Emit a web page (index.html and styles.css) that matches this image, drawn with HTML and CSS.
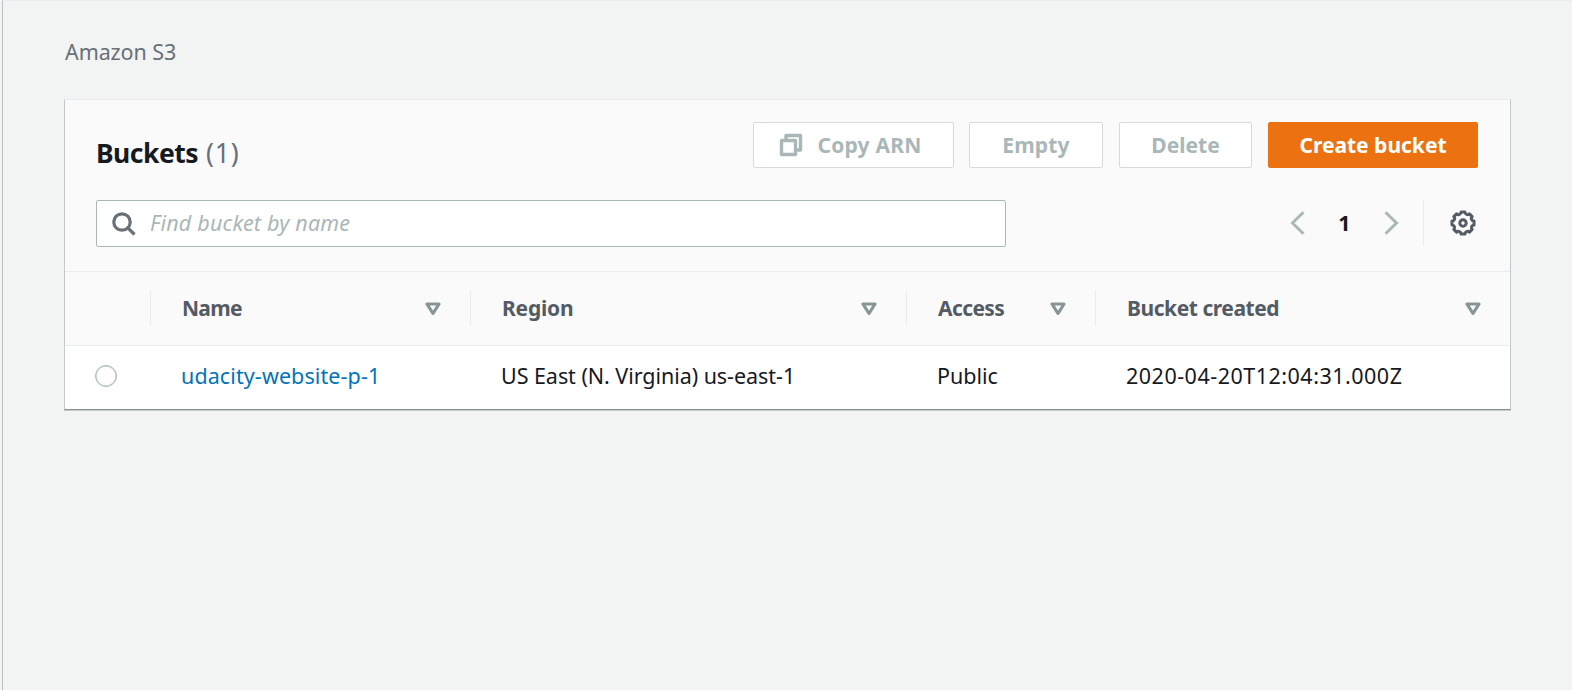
FILE: index.html
```html
<!DOCTYPE html>
<html lang="en">
<head>
<meta charset="utf-8">
<title>Amazon S3</title>
<link rel="stylesheet" href="styles.css">
</head>
<body>
<main class="page">
  <nav class="breadcrumb"><span class="t-crumb">Amazon S3</span></nav>
  <section class="card">
    <header class="toolbar">
      <div class="title-row">
        <h1 class="title"><span class="t-title">Buckets</span> <span class="count">(1)</span></h1>
        <div class="actions">
          <button class="btn btn-copy" disabled>
            <svg class="copy-icon" width="24" height="24" viewBox="0 0 24 24"><path d="M7 7V2.500h14.500V17H17M2.500 7.500h14v14h-14z"/></svg>
            <span class="t-copy">Copy ARN</span>
          </button>
          <button class="btn btn-empty" disabled><span class="t-empty">Empty</span></button>
          <button class="btn btn-delete" disabled><span class="t-delete">Delete</span></button>
          <button class="btn btn-primary"><span class="t-create">Create bucket</span></button>
        </div>
      </div>
      <div class="filter-row">
        <div class="search">
          <svg class="search-icon" width="24" height="24" viewBox="0 0 24 24"><circle cx="10" cy="10" r="8.200"/><path d="M15.800 15.800L22.500 22.500"/></svg>
          <span class="placeholder">Find bucket by name</span>
        </div>
        <div class="pager">
          <svg class="chevron" width="16" height="24" viewBox="0 0 16 24"><path d="M13.500 1.200L2.500 12l11 10.800"/></svg>
          <span class="page-number">1</span>
          <svg class="chevron" width="16" height="24" viewBox="0 0 16 24"><path d="M2.500 1.200L13.500 12l-11 10.800"/></svg>
          <span class="pager-divider"></span>
          <svg class="gear" width="26" height="26" viewBox="-13 -13 26 26"><path d="M11.030 -1.940L11.030 1.940A2.600 2.600 0 0 0 9.170 6.420L6.420 9.170A2.600 2.600 0 0 0 1.940 11.030L-1.940 11.030A2.600 2.600 0 0 0 -6.420 9.170L-9.170 6.420A2.600 2.600 0 0 0 -11.030 1.940L-11.030 -1.940A2.600 2.600 0 0 0 -9.170 -6.420L-6.420 -9.170A2.600 2.600 0 0 0 -1.940 -11.030L1.940 -11.030A2.600 2.600 0 0 0 6.420 -9.170L9.170 -6.420A2.600 2.600 0 0 0 11.030 -1.940Z"/><circle r="3.200"/></svg>
        </div>
      </div>
    </header>
    <div class="grid head">
      <div class="cell"></div>
      <div class="cell"><span class="t-name">Name</span><svg class="sort" width="16" height="14" viewBox="0 0 16 14"><path d="M2 2h12L8 11.500z"/></svg></div>
      <div class="cell"><span class="t-region">Region</span><svg class="sort" width="16" height="14" viewBox="0 0 16 14"><path d="M2 2h12L8 11.500z"/></svg></div>
      <div class="cell"><span class="t-access">Access</span><svg class="sort" width="16" height="14" viewBox="0 0 16 14"><path d="M2 2h12L8 11.500z"/></svg></div>
      <div class="cell"><span class="t-created">Bucket created</span><svg class="sort" width="16" height="14" viewBox="0 0 16 14"><path d="M2 2h12L8 11.500z"/></svg></div>
    </div>
    <div class="grid row">
      <div class="select"><span class="radio"></span></div>
      <div class="data"><a class="link">udacity-website-p-1</a></div>
      <div class="data"><span class="v-region">US East (N. Virginia) us-east-1</span></div>
      <div class="data"><span class="v-access">Public</span></div>
      <div class="data"><span class="v-date">2020-04-20T12:04:31.000Z</span></div>
    </div>
  </section>
</main>
</body>
</html>
```
FILE: styles.css
```css
* { box-sizing: border-box; }
body {
  margin: 0;
  height: 690px;
  overflow: hidden;
  background: #f2f3f3;
  font: 21.5px/30px "Noto Sans", sans-serif;
  color: #16191f;
}
.page {
  height: 690px;
  margin-left: 2px;
  border-left: 1px solid #b9c1c1;
  border-top: 1px solid #eaeded;
  padding: 36px 61px 0;
}
.breadcrumb { height: 62px; padding-left: 1px; color: #687078; }
.breadcrumb span, .btn span, .cell span, .data span, .link, .placeholder { white-space: nowrap; }
.card {
  width: 1447px;
  height: 311px;
  border: 1px solid #c3caca;
  border-top-color: #eaeded;
  border-bottom-color: #879596;
  box-shadow: 0 1px 0 #c3caca;
  background: #fff;
}
.toolbar {
  height: 172px;
  padding: 22px 32px 0 31px;
  background: #fafafa;
  border-bottom: 1px solid #eaeded;
}
.title-row { display: flex; justify-content: space-between; height: 78px; }
.title { margin: 13px 0 0; font-size: 26.5px; line-height: 36px; font-weight: 700; white-space: nowrap; }
.t-title { letter-spacing: -.5px; }
.count { margin-left: 1px; font-weight: 400; color: #687078; letter-spacing: .8px; }
.actions { display: flex; }
.btn {
  display: flex;
  align-items: center;
  justify-content: center;
  height: 46px;
  padding: 0 0 1px;
  border: 1px solid #d5dbdb;
  border-radius: 2px;
  background: #fff;
  color: #aab7b8;
  font: 700 21px/30px "Noto Sans", sans-serif;
}
.btn-copy { width: 201px; gap: 15px; margin-right: 15px; padding-right: 7px; }
.btn-empty { width: 134px; margin-right: 16px; }
.btn-delete { width: 133px; margin-right: 16px; }
.btn-primary { width: 210px; background: #ec7211; border-color: #ec7211; color: #fff; }
.t-copy, .t-empty { letter-spacing: .2px; }
.copy-icon { fill: none; stroke: #aab7b8; stroke-width: 3.4; stroke-linejoin: round; }
.filter-row { display: flex; justify-content: space-between; }
.search {
  display: flex;
  align-items: center;
  width: 910px;
  height: 47px;
  padding-left: 15px;
  border: 1px solid #aab7b8;
  border-radius: 2px;
  background: #fff;
}
.search-icon { fill: none; stroke: #687078; stroke-width: 3.2; }
.placeholder { margin: -1px 0 0 14px; font-style: italic; color: #aab7b8; letter-spacing: .2px; }
.pager { display: flex; align-items: center; height: 46px; padding-right: 2px; }
.chevron { fill: none; stroke: #aab7b8; stroke-width: 3; }
.page-number { width: 77px; margin-top: -1px; text-align: center; font-weight: 700; }
.pager-divider { width: 1px; height: 46px; margin: 0 26px 0 24px; background: #eaeded; }
.gear { fill: none; stroke: #545b64; stroke-width: 3; stroke-linejoin: round; }
.grid { display: grid; grid-template-columns: 85px 320px 436px 189px 1fr; }
.head { height: 74px; align-items: center; background: #fafafa; border-bottom: 1px solid #eaeded; color: #545b64; font-size: 21px; font-weight: 700; }
.cell { display: flex; align-items: center; justify-content: space-between; height: 36px; margin-top: -1px; padding: 0 29px 0 31px; border-left: 1px solid #eaeded; }
.cell span { margin-top: -1px; }
.cell:first-child { border-left: 0; }
.t-name { letter-spacing: -.7px; }
.t-region { letter-spacing: -.2px; }
.t-access { letter-spacing: -.6px; }
.t-created { letter-spacing: -.45px; }
.sort { margin-top: 1px; fill: none; stroke: #879596; stroke-width: 3.2; stroke-linejoin: round; }
.row { height: 61px; align-items: center; }
.select { padding: 0 0 2px 30px; }
.radio { display: block; width: 22px; height: 22px; border: 1px solid #aab7b8; border-radius: 50%; box-shadow: inset 0 0 0 .5px #aab7b8; }
.data { padding: 0 0 1px 31px; }
.link { color: #0073bb; letter-spacing: .1px; }
.v-region { letter-spacing: -.05px; }
.v-date { letter-spacing: .5px; }
.t-crumb { letter-spacing: -.1px; }
```
